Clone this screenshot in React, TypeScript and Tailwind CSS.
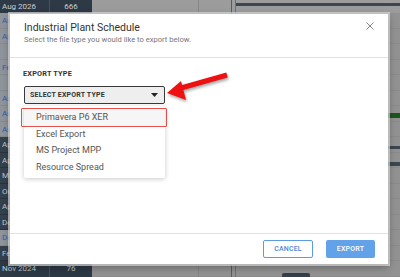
import React from "react";

const rows = [
  { l: "Aug 2025", v: "", dark: false },
  { l: "Apr 2025", v: "", dark: false },
  { l: "", v: "", dark: false },
  { l: "Feb 2025", v: "", dark: false },
  { l: "", v: "", dark: false },
  { l: "Aug 2024", v: "", dark: false },
  { l: "Aug 2024", v: "", dark: false },
  { l: "Aug 2024", v: "", dark: false },
  { l: "Apr 2024", v: "", dark: true },
  { l: "Apr 2024", v: "", dark: true },
  { l: "May 2024", v: "", dark: true },
  { l: "Oct 2024", v: "", dark: true },
  { l: "Apr 2024", v: "", dark: true },
  { l: "Dec 2024", v: "", dark: true },
  { l: "Dec 2024", v: "", dark: false },
  { l: "Feb 2024", v: "", dark: true },
  { l: "Nov 2024", v: "76", dark: true },
];

const items = ["Primavera P6 XER", "Excel Export", "MS Project MPP", "Resource Spread"];

export default function App() {
  return (
    <div className="relative w-[400px] h-[277px] overflow-hidden bg-[#929292] font-['Roboto',sans-serif]">
      {/* background gantt */}
      <div className="flex flex-col">
        <div className="flex h-[13px]">
          <div className="w-[49px] bg-[#2d3945] text-[#c9ced3] text-[8px] leading-[13px] pl-[2px]">Aug 2026</div>
          <div className="w-[43px] bg-[#2d3945] border-l border-[#465260] text-[#c9ced3] text-[8px] leading-[13px] text-center">666</div>
          <div className="flex-1 bg-[#9c9c9c]" />
        </div>
        {rows.map((r, i) => (
          <div key={i} className="flex h-[15.5px]">
            <div
              className={
                r.dark && i !== 16
                  ? "w-[49px] bg-[#35424e] text-[#c2c8ce] text-[8px] leading-[15.5px] pl-[2px] border-b border-[#2a343e]"
                  : i === 16
                  ? "w-[49px] bg-[#2d3945] text-[#c2c8ce] text-[8px] leading-[15.5px] pl-[2px]"
                  : "w-[49px] bg-[#8f959b] text-[#2f5fae] text-[8px] leading-[15.5px] pl-[2px] border-b border-[#868b90]"
              }
            >
              {i === 16 ? (
                r.l
              ) : (
                <span className="block w-[8px] overflow-hidden whitespace-nowrap">{r.l}</span>
              )}
            </div>
            <div
              className={
                r.dark
                  ? "w-[43px] bg-[#2d3945] border-l border-[#465260] text-[#c2c8ce] text-[8px] leading-[15.5px] text-center"
                  : "w-[43px] bg-[#8f959b] border-l border-[#868b90] text-[8px] leading-[15.5px] text-center"
              }
            >
              {r.v}
            </div>
            <div className="flex-1 bg-[#929292] border-b border-[#8b8b8b]" />
          </div>
        ))}
      </div>

      {/* chart marks */}
      <div className="absolute top-0 bottom-0 left-[198px] w-px bg-[#868686]" />
      <div className="absolute top-0 bottom-0 left-[231px] w-px bg-[#2f7a2f]" />
      <div className="absolute top-0 bottom-0 left-[235px] w-px bg-[#5575a8]" />
      <div className="absolute top-[3px] left-[236px] right-0 h-[3px] bg-[#3b4650]" />
      <div className="absolute top-[113px] left-[300px] right-0 h-[5px] bg-[#1d561d]" />
      <div className="absolute top-[146px] left-[300px] right-0 h-[3px] bg-[#3b4650]" />
      <div className="absolute top-[162px] left-[300px] right-0 h-[4px] bg-[#3b4650]" />
      <div className="absolute top-[273px] left-[282px] w-[28px] h-[6px] rounded-t-[2px] bg-[#33404b]" />

      {/* modal */}
      <div className="absolute left-[10px] top-[14px] w-[378px] h-[250px] bg-white flex flex-col shadow-[0_0_0_2px_rgba(215,215,215,0.7),0_3px_8px_rgba(0,0,0,0.35)]">
        <div className="relative h-[44px] border-b border-[#e2e2e2] px-[14px] pt-[7px]">
          <div className="text-[10.5px] leading-[13px] text-[#333]">Industrial Plant Schedule</div>
          <div className="mt-[1px] text-[7.6px] leading-[10px] text-[#777]">Select the file type you would like to export below.</div>
          <svg className="absolute right-[14px] top-[8px]" width="8" height="8" viewBox="0 0 8 8">
            <path d="M0.5 0.5 L7.5 7.5 M7.5 0.5 L0.5 7.5" stroke="#777" strokeWidth="0.9" fill="none" />
          </svg>
        </div>

        <div className="flex-1 px-[13px] pt-[11px]">
          <div className="text-[7.3px] leading-[9px] font-bold text-[#333] tracking-[0.2px]">EXPORT TYPE</div>
          <div className="mt-[8px] ml-px w-[141px] h-[18px] bg-[#eeeeee] border-[1.5px] border-[#3a3a3a] rounded-[2px] flex items-center justify-between pl-[5px] pr-[6px]">
            <span className="text-[7px] font-bold text-[#333] tracking-[0.2px]">SELECT EXPORT TYPE</span>
            <svg width="7" height="4" viewBox="0 0 7 4">
              <path d="M0 0 L7 0 L3.5 4 Z" fill="#222" />
            </svg>
          </div>
          <div className="mt-[2px] ml-px w-[141px] bg-white rounded-[2px] shadow-[0_1px_5px_rgba(0,0,0,0.22)] py-[3px] flex flex-col">
            {items.map((it, i) => (
              <div key={it} className={i === 0 ? "relative h-[16.5px] bg-[#f6f6f6] pl-[12px] text-[9px] leading-[16.5px] text-[#555]" : "h-[16.5px] pl-[12px] text-[9px] leading-[16.5px] text-[#555]"}>
                {it}
                {i === 0 && (
                  <span className="absolute -left-[3px] -right-[2px] -top-[1px] -bottom-[1px] border-[1.5px] border-[#e4504a] rounded-[1px]" />
                )}
              </div>
            ))}
          </div>
        </div>

        <div className="h-[31px] border-t border-[#e2e2e2] flex justify-end items-start gap-[13px] pt-[6px] pr-[13px]">
          <button className="w-[50px] h-[18px] border border-[#5b9be0] rounded-[2px] bg-white text-[7px] font-medium text-[#4a88d4] tracking-[0.2px]">CANCEL</button>
          <button className="w-[49px] h-[18px] rounded-[2px] bg-[#62a2e8] text-[7px] font-medium text-white tracking-[0.2px]">EXPORT</button>
        </div>
      </div>

      {/* red arrow */}
      <svg className="absolute inset-0 pointer-events-none" width="400" height="277" viewBox="0 0 400 277">
        <g style={{ filter: "drop-shadow(1px 2px 1.5px rgba(0,0,0,0.35))" }}>
          <path d="M181 88 L227 75" stroke="#ee1111" strokeWidth="5" strokeLinecap="butt" />
          <polygon points="167,93 181,81 186,100" fill="#ee1111" />
        </g>
      </svg>
    </div>
  );
}
